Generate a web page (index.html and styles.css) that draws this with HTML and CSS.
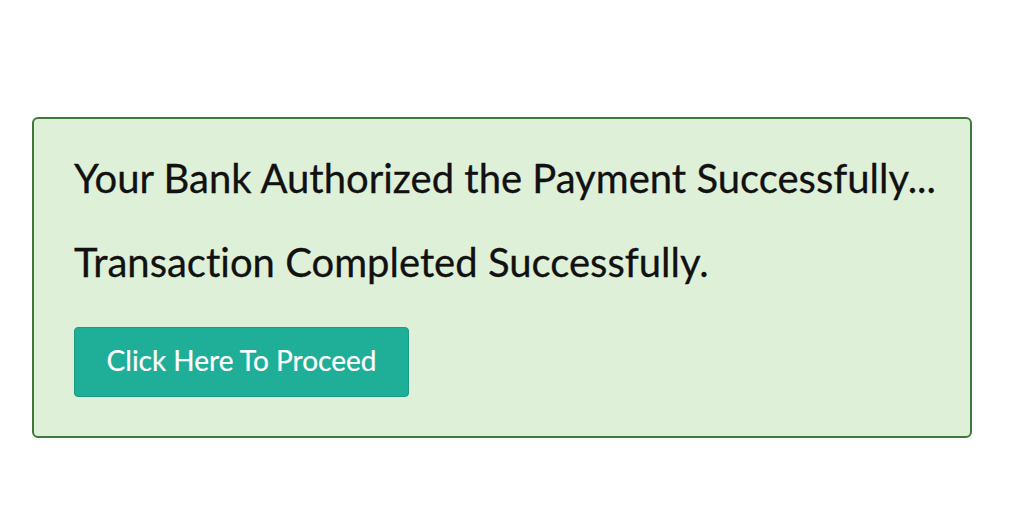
FILE: index.html
```html
<!DOCTYPE html>
<html>
<head>
<meta charset="utf-8">
<link rel="stylesheet" href="styles.css">
</head>
<body>
<div class="page">
  <div class="alert">
    <p class="msg">Your Bank Authorized the Payment Successfully...</p>
    <p class="msg">Transaction Completed Successfully.</p>
    <a class="btn" href="#">Click Here To Proceed</a>
  </div>
</div>
</body>
</html>
```
FILE: styles.css
```css
html, body {
  margin: 0;
  padding: 0;
  background: #ffffff;
}
.page {
  padding: 117px 0 0 32px;
  font-family: Lato, "Open Sans", sans-serif;
  font-variant-ligatures: none;
}
.alert {
  box-sizing: border-box;
  width: 940px;
  height: 321px;
  background: #dff0d8;
  border: 2px solid #3d7a3a;
  border-radius: 6px;
  padding: 37px 20px 0 40px;
}
.msg {
  margin: 0 0 40px 0;
  font-size: 40px;
  line-height: 44px;
  color: #111;
  white-space: nowrap;
  -webkit-text-stroke: 0.3px #111;
}
.msg + .msg {
  margin-bottom: 43px;
}
.btn {
  display: inline-flex;
  align-items: center;
  justify-content: center;
  box-sizing: border-box;
  width: 335px;
  height: 70px;
  padding-bottom: 4px;
  background: #1fae98;
  border: 1px solid #199b86;
  border-radius: 4px;
  color: #fff;
  font-size: 28px;
  text-decoration: none;
  -webkit-text-stroke: 0.2px #fff;
}
```
